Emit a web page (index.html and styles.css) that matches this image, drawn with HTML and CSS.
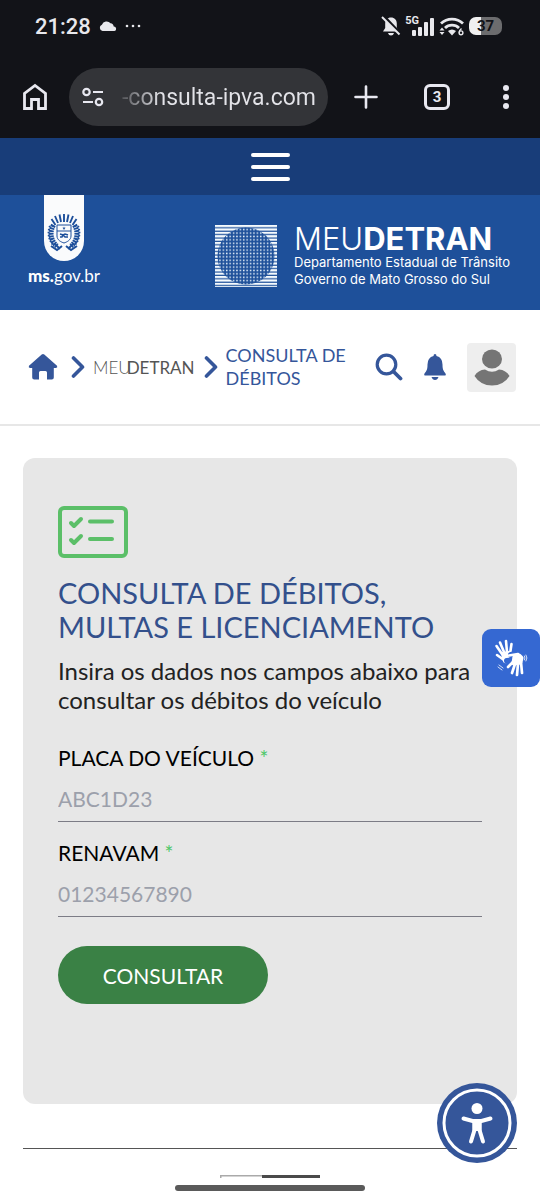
FILE: index.html
```html
<!DOCTYPE html>
<html lang="pt-BR">
<head>
    <meta charset="UTF-8">
    <meta name="viewport" content="width=device-width, initial-scale=1.0">
    <title>Consulta de Débitos</title>
    <link rel="stylesheet" href="styles.css">
</head>
<body>
    <div class="status">
        <span class="time">21:28</span>
        <svg class="cloud" width="18" height="10" viewBox="0 0 18 10"><path d="M3.500 10a3.300 3.300 0 0 1-.6-6.300A5 5 0 0 1 11.500 2.300a3.600 3.600 0 0 1 3.200 3.200A2.300 2.300 0 0 1 15.500 10z" fill="#e8e8ec"/></svg>
        <svg width="16" height="4" viewBox="0 0 16 4" fill="#e8e8ec"><circle cx="2" cy="2" r="1.300"/><circle cx="8" cy="2" r="1.300"/><circle cx="14" cy="2" r="1.300"/></svg>
        <div class="signals">
            <svg width="20" height="22" viewBox="0 0 20 22">
                <path d="M10 2.500c3.500 0 5.800 2.500 5.800 6v4.500l2.200 3.500H2l2.200-3.500V8.500c0-3.500 2.300-6 5.800-6z" fill="#e8e8ec"/>
                <path d="M7 18h6c-.5 1.700-1.600 2.500-3 2.500S7.500 19.700 7 18z" fill="#e8e8ec"/>
                <path d="M2.500 1l17 18" stroke="#121318" stroke-width="3"/>
                <path d="M1 2l17.500 17.500" stroke="#e8e8ec" stroke-width="2"/>
            </svg>
            <div class="mobile-net">
                <span>5G</span>
                <svg width="23" height="18" viewBox="0 0 23 18" fill="#e8e8ec"><rect x="0" y="12" width="4" height="6" rx="1"/><rect x="6" y="9" width="4" height="9" rx="1"/><rect x="12" y="4" width="4" height="14" rx="1"/><rect x="18" y="0" width="4" height="18" rx="1"/></svg>
            </div>
            <svg width="26" height="20" viewBox="0 0 26 20">
                <g fill="none" stroke="#e8e8ec" stroke-width="2.800"><path d="M2 7.500a16 16 0 0 1 22 0"/><path d="M6 12a10 10 0 0 1 14 0"/></g>
                <path d="M9 15q4-3 8 0l-4 4.500z" fill="#e8e8ec"/>
                <path d="M.5 14.500l2.500-3 2.500 3zM.5 16l2.500 3 2.500-3z" fill="#e8e8ec"/>
                <path d="M22.500 12.500q-2.500 2-2.300 4" fill="none" stroke="#e8e8ec" stroke-width="1.500"/>
                <circle cx="22" cy="16.800" r="1.900" fill="none" stroke="#e8e8ec" stroke-width="1.400"/>
            </svg>
            <span class="battery">37</span>
        </div>
    </div>

    <div class="browser">
        <button class="tool" aria-label="Início">
            <svg width="26" height="28" viewBox="0 0 26 28"><path d="M2.500 25.500V10.500L13 2.500l10.500 8v15h-7v-9h-7v9z" fill="none" stroke="#e8e8f0" stroke-width="2.800"/></svg>
        </button>
        <div class="address">
            <svg width="24" height="20" viewBox="0 0 24 20" fill="none" stroke="#e8e8f0" stroke-width="2.200"><circle cx="5.500" cy="5" r="3.200"/><path d="M12 5h10M2 15h10"/><circle cx="18" cy="15" r="3.200"/></svg>
            <span class="url">-consulta-ipva.com</span>
        </div>
        <div class="tools">
            <button class="tool" aria-label="Nova guia">
                <svg width="24" height="24" viewBox="0 0 24 24"><path d="M12 1.500v21M1.500 12h21" stroke="#e8e8f0" stroke-width="2.600" stroke-linecap="round"/></svg>
            </button>
            <button class="tool tabs" aria-label="Guias">3</button>
            <button class="tool" aria-label="Menu do navegador">
                <svg width="8" height="24" viewBox="0 0 8 24" fill="#e8e8f0"><circle cx="4" cy="3" r="3"/><circle cx="4" cy="12" r="3"/><circle cx="4" cy="21" r="3"/></svg>
            </button>
        </div>
    </div>

    <nav class="menu">
        <button class="hamburger" aria-label="Menu"><i></i><i></i><i></i></button>
    </nav>

    <header class="header">
        <a class="gov" href="#">
            <svg width="40" height="66" viewBox="0 0 40 66">
                <path d="M0 0h40v46a20 20 0 0 1-40 0z" fill="#fafbfc"/>
                <g stroke="#1d4f9b" fill="none">
                    <path d="M20 27v-8M17 27l-1.500-7.500M23 27l1.500-7.500M14 28l-3-7M26 28l3-7M11.500 30l-4-6M28.500 30l4-6" stroke-width="1.900"/>
                    <path d="M9.500 30C5 38 7 46 13 51M30.500 30C35 38 33 46 27 51" stroke-width="5" stroke-dasharray="2 .7"/>
                    <path d="M6 31C3 38 5 46 10 51M34 31c3 7 1 15-4 20" stroke-width="2" stroke-dasharray="1.500 1.500"/>
                    <path d="M7 51l6 4 5-4M33 51l-6 4-5-4M11 49l5 5M29 49l-5 5" stroke-width="2"/>
                    <path d="M13 30h14v11c0 4-4 6-7 7-3-1-7-3-7-7z" fill="#fafbfc" stroke-width="1"/>
                    <path d="M13 36h14" stroke-width="1"/>
                    <path d="M16 39l3 1 2-1 3 1M16 42h2l1-2 2 2h3" stroke-width="1.500"/>
                </g>
                <path d="M20 31.500l.5 1.200h1.200l-1 .8.4 1.300-1.100-.8-1.100.8.4-1.300-1-.8h1.200z" fill="#1d4f9b"/>
            </svg>
            <span class="gov-name"><b>ms.</b>gov.br</span>
        </a>
        <a class="detran" href="#">
            <svg width="62" height="62" viewBox="0 0 62 62">
                <defs>
                    <pattern id="lines" width="62" height="3.400" patternUnits="userSpaceOnUse"><rect width="62" height="2.200" fill="#f5fafd"/></pattern>
                    <pattern id="dots" width="3.400" height="3.400" patternUnits="userSpaceOnUse"><rect x=".8" y=".5" width="1.500" height="1.500" fill="#e8f3fb"/></pattern>
                </defs>
                <rect width="62" height="62" fill="url(#lines)"/>
                <circle cx="31" cy="31" r="28.500" fill="#1e509a"/>
                <circle cx="31" cy="31" r="28.500" fill="url(#dots)"/>
            </svg>
            <span class="detran-text">
                <span class="detran-name">MEU<b>DETRAN</b></span>
                <span class="detran-sub">Departamento Estadual de Trânsito<br>Governo de Mato Grosso do Sul</span>
            </span>
        </a>
    </header>

    <div class="crumbs">
        <a class="crumb-home" href="#" aria-label="Início">
            <svg width="30" height="28" viewBox="0 0 30 28"><path d="M13.700 1.500q1.300-1.100 2.600 0L29 12.700q1 1.800-1 2.300h-2.200v9.500q0 2-2 2H19v-7q0-1.500-1.500-1.500h-5q-1.500 0-1.500 1.500v7H6.200q-2 0-2-2V15H2q-2-.5-1-2.300z" fill="#35569a"/></svg>
        </a>
        <svg class="arrow" width="14" height="24" viewBox="0 0 14 24"><path d="M2.500 3l9 9-9 9" fill="none" stroke="#35569a" stroke-width="3.600" stroke-linecap="round" stroke-linejoin="round"/></svg>
        <a class="crumb" href="#"><span>MEU</span><b>DETRAN</b></a>
        <svg class="arrow" width="14" height="24" viewBox="0 0 14 24"><path d="M2.500 3l9 9-9 9" fill="none" stroke="#35569a" stroke-width="3.600" stroke-linecap="round" stroke-linejoin="round"/></svg>
        <span class="crumb-now">CONSULTA DE DÉBITOS</span>
        <div class="actions">
            <button aria-label="Buscar">
                <svg width="28" height="28" viewBox="0 0 28 28" fill="none" stroke="#35569a" stroke-linecap="round"><circle cx="11.500" cy="11.500" r="9.300" stroke-width="3.200"/><path d="M18.500 18.500l7 7" stroke-width="3.800"/></svg>
            </button>
            <button aria-label="Notificações">
                <svg width="24" height="28" viewBox="0 0 24 28" fill="#35569a"><path d="M12 1q1.500 0 1.500 2 6 1.500 6 8.500c0 5 1 6.500 3 9q1 2-1 2h-19q-2 0-1-2c2-2.500 3-4 3-9q0-7 6-8.500 0-2 1.500-2z"/><path d="M8.500 24h7q-1 3-3.500 3t-3.500-3z"/></svg>
            </button>
            <button class="avatar" aria-label="Perfil">
                <svg width="36" height="38" viewBox="0 0 36 38" fill="#757575"><ellipse cx="18" cy="11" rx="10" ry="9.500"/><path d="M11 21.500q7 4.500 14 0 7 .5 10.500 6.500-6 9.500-17.500 9.500T.5 28Q4 22 11 21.500z"/></svg>
            </button>
        </div>
    </div>

    <main class="card">
        <svg class="card-icon" width="70" height="52" viewBox="0 0 70 52" fill="none" stroke="#5bbf68" stroke-linecap="round" stroke-linejoin="round">
            <rect x="2" y="2" width="66" height="48" rx="4" stroke-width="4"/>
            <path d="M13 17l3 3 7-7M13 34l3 3 7-7M32 15.500h22M32 33h22" stroke-width="4"/>
        </svg>
        <h1>CONSULTA DE DÉBITOS, MULTAS E LICENCIAMENTO</h1>
        <p class="intro">Insira os dados nos campos abaixo para consultar os débitos do veículo</p>
        <form onsubmit="return false">
            <div class="field">
                <label for="placa">PLACA DO VEÍCULO <em>*</em></label>
                <input type="text" id="placa" placeholder="ABC1D23">
            </div>
            <div class="field">
                <label for="renavam">RENAVAM <em>*</em></label>
                <input type="text" id="renavam" placeholder="01234567890">
            </div>
            <button class="submit">CONSULTAR</button>
        </form>
    </main>

    <footer class="footer">
        <svg width="100" height="3" viewBox="0 0 100 3"><path d="M0 3V0h42v1.500H1.500V3z" fill="#aaa"/><path d="M42 0h58v3H42z" fill="#4a4a4a"/></svg>
    </footer>

    <button class="libras" aria-label="Tradução em Libras">
        <svg width="36" height="38" viewBox="0 0 36 38" fill="none" stroke="#fff" stroke-linecap="round" stroke-linejoin="round">
            <path d="M10 15l6-1 2 4-2 5-4-1z" fill="#fff" stroke-width="4"/>
            <path d="M9 15L3.500 7M11 13L7 3.500M14 13l-1-11M17 15l1.500-10M11 21l-7-5" stroke-width="2.600"/>
            <path d="M18 16l8-1.500 4 4-2 6-8 1-2-4-4 .5" stroke="#3568d2" stroke-width="6"/>
            <path d="M22 18l4-1 2 2-1 4-6 1z" fill="#fff" stroke-width="5"/>
            <path d="M25 15l-9 1.500M20 23l-5 5M22 25l-3 9M25 25l-1 11M28 23l1 11" stroke-width="2.700"/>
            <path d="M33 16q2 3 0 6M31.500 17q1 2 0 4M6 26l4 3M5 28l4 3" stroke-width=".8"/>
        </svg>
    </button>
    <button class="access" aria-label="Acessibilidade">
        <svg width="80" height="80" viewBox="0 0 80 80">
            <circle cx="40" cy="40" r="40" fill="#35569a"/>
            <circle cx="40" cy="40" r="33" fill="none" stroke="#fff" stroke-width="3"/>
            <circle cx="40" cy="25.500" r="5.500" fill="#fff"/>
            <path d="M26.500 35.500l9 2.500h9l9-2.500M37.500 39v8l-3.500 11.500M42.500 39v8l3.500 11.500" fill="none" stroke="#fff" stroke-width="4" stroke-linecap="round"/>
            <path d="M35.500 36h9v12h-9z" fill="#fff"/>
        </svg>
    </button>
    <div class="gesture"></div>
</body>
</html>
```

FILE: styles.css
```css
* {
    margin: 0;
    padding: 0;
    box-sizing: border-box;
}
body {
    font-family: Lato, "Noto Sans", sans-serif;
    background-color: #fff;
}
a {
    color: inherit;
    text-decoration: none;
}
button {
    border: 0;
    background: none;
    font-family: inherit;
    cursor: pointer;
}
svg {
    display: block;
    flex-shrink: 0;
}

/* status bar */
.status {
    height: 56px;
    padding: 0 38px 4px 35px;
    display: flex;
    align-items: center;
    gap: 8px;
    background-color: #121318;
    color: #e8e8ec;
    font-family: Roboto, sans-serif;
}
.time {
    font-size: 22px;
    font-weight: 500;
}
.signals {
    margin-left: auto;
    display: flex;
    align-items: center;
    gap: 4px;
}
.mobile-net {
    display: flex;
    align-items: flex-start;
    font-size: 11px;
    line-height: 10px;
    font-weight: 700;
}
.mobile-net svg {
    margin-left: -7px;
    margin-top: 2px;
}
.battery {
    width: 33px;
    height: 18px;
    border-radius: 7px;
    background: linear-gradient(90deg, #f0f0f0 37%, #6c6c6e 37%);
    color: #121318;
    font-size: 15px;
    line-height: 18px;
    font-weight: 700;
    text-align: center;
}

/* browser bar */
.browser {
    height: 82px;
    padding: 0 30px 0 22px;
    display: flex;
    align-items: center;
    background-color: #121318;
    color: #e8e8f0;
    font-family: Roboto, sans-serif;
}
.address {
    flex: 1;
    height: 58px;
    margin: 0 26px 0 21px;
    padding: 0 12px;
    border-radius: 29px;
    display: flex;
    align-items: center;
    justify-content: space-between;
    background-color: #333438;
}
.url {
    font-size: 23px;
    background: linear-gradient(90deg, #55565a, #e3e3e8 20%);
    -webkit-background-clip: text;
    background-clip: text;
    color: transparent;
}
.tools {
    display: flex;
    align-items: center;
    gap: 46px;
}
.tabs {
    width: 26px;
    height: 26px;
    margin-right: 6px;
    border: 3px solid #e8e8f0;
    border-radius: 6px;
    color: #e8e8f0;
    font-size: 15px;
    line-height: 20px;
    font-weight: 700;
}

/* top of the site */
.menu {
    height: 57px;
    display: flex;
    justify-content: center;
    align-items: center;
    background-color: #183d79;
}
.hamburger {
    width: 39px;
    display: flex;
    flex-direction: column;
    gap: 8px;
}
.hamburger i {
    height: 4px;
    border-radius: 2px;
    background-color: #fff;
}
.header {
    height: 115px;
    padding: 0 30px 0 28px;
    display: flex;
    justify-content: space-between;
    align-items: flex-start;
    background-color: #1e509a;
    color: #fff;
}
.gov {
    display: flex;
    flex-direction: column;
    align-items: center;
    gap: 4px;
}
.gov-name {
    font-size: 17px;
    line-height: 22px;
}
.gov-name b {
    font-weight: 900;
}
.detran {
    padding-top: 28px;
    display: flex;
    gap: 17px;
    font-family: Inter, sans-serif;
}
.detran svg {
    margin-top: 2px;
}
.detran-name {
    display: block;
    font-size: 31px;
    line-height: 31px;
    font-weight: 300;
}
.detran-name b {
    font-weight: 700;
}
.detran-sub {
    display: block;
    font-size: 13px;
    line-height: 17px;
}

/* breadcrumb */
.crumbs {
    height: 116px;
    padding: 0 24px 0 28px;
    display: flex;
    align-items: center;
    border-bottom: 2px solid #e7e7e7;
    font-size: 18px;
}
.arrow {
    margin: 0 8px 0 13px;
}
.crumb {
    color: #555;
    display: flex;
    font-size: 17px;
}
.crumb span {
    font-weight: 300;
    margin-right: -4px;
}
.crumb b {
    font-weight: 400;
}
.crumb + .arrow {
    margin-left: 9px;
}
.crumb-now {
    width: 130px;
    line-height: 23px;
    color: #35569a;
}
.actions {
    margin-left: auto;
    display: flex;
    align-items: center;
    gap: 20px;
}
.avatar {
    width: 49px;
    height: 49px;
    border-radius: 4px;
    display: flex;
    justify-content: center;
    align-items: center;
    background-color: #eee;
}

/* form card */
.card {
    min-height: 646px;
    margin: 32px 23px 0;
    padding: 48px 35px;
    border-radius: 12px;
    background-color: #e7e7e7;
}
h1 {
    margin-top: 18px;
    font-size: 29px;
    line-height: 34px;
    font-weight: 400;
    color: #33508c;
}
.intro {
    margin-top: 12px;
    font-size: 24px;
    line-height: 29px;
    color: #222;
}
form {
    margin-top: 30px;
}
.field {
    height: 95px;
}
.field label {
    display: block;
    font-size: 21px;
    line-height: 28px;
    color: #000;
}
.field em {
    font-style: normal;
    color: #4fc76a;
}
.field input {
    width: 100%;
    height: 50px;
    padding-top: 4px;
    border: 0;
    border-bottom: 1px solid #7c7c86;
    outline: none;
    background: none;
    font-family: inherit;
    font-size: 21px;
    color: #222;
}
.field input::placeholder {
    color: #9ca0ab;
}
.submit {
    width: 210px;
    height: 58px;
    margin-top: 12px;
    border-radius: 29px;
    background-color: #3a8145;
    color: #fff;
    font-size: 21px;
}

.footer {
    margin: 44px 23px 0;
    padding-top: 26px;
    border-top: 1px solid #555;
    display: flex;
    justify-content: center;
}

/* floating buttons */
.libras {
    position: fixed;
    right: 0;
    top: 629px;
    width: 58px;
    height: 58px;
    border-radius: 9px;
    display: flex;
    justify-content: center;
    align-items: center;
    background-color: #3568d2;
}
.access {
    position: fixed;
    right: 23px;
    bottom: 37px;
}
.gesture {
    position: fixed;
    left: 50%;
    bottom: 9px;
    width: 190px;
    height: 6px;
    margin-left: -95px;
    border-radius: 3px;
    background-color: #5a5a5a;
}
```
